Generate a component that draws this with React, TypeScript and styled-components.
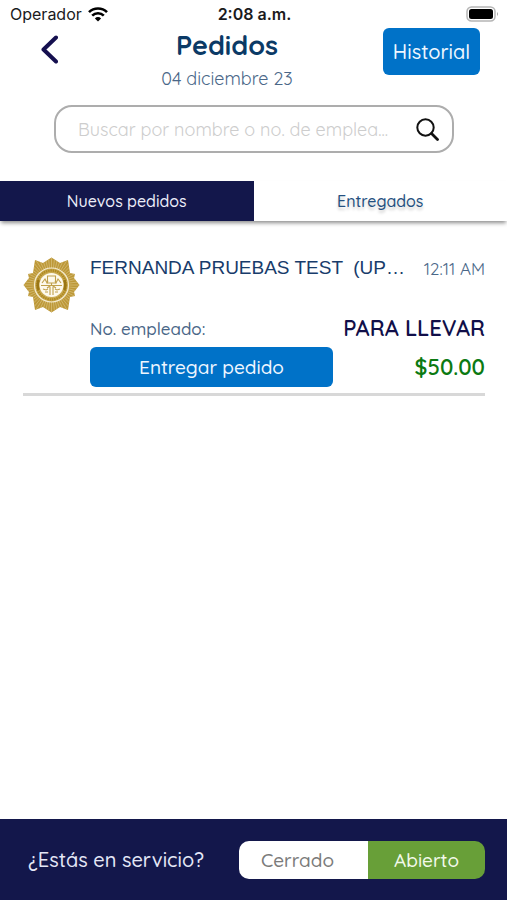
import React, { useState } from "react";
import styled, { createGlobalStyle } from "styled-components";

const GlobalStyle = createGlobalStyle`
  *, *::before, *::after { box-sizing: border-box; }
  body { margin: 0; background: #fff; }
  button, input { font: inherit; margin: 0; }
`;

const Screen = styled.div`
  display: flex;
  flex-direction: column;
  min-height: 100vh;
  font-family: Quicksand, Lato, sans-serif;
  color: #0b3a66;
`;

const StatusBar = styled.div`
  display: grid;
  grid-template-columns: 1fr auto 1fr;
  align-items: center;
  height: 28px;
  padding: 0 8px 0 10px;
  font-family: Inter, sans-serif;
  font-size: 16px;
  color: #1b1b1d;
`;

const Carrier = styled.span`
  display: flex;
  align-items: center;
  gap: 6px;
`;

const Clock = styled.span`
  font-weight: 600;
`;

const Battery = styled.svg`
  justify-self: end;
`;

const Header = styled.header`
  display: flex;
  align-items: flex-start;
  padding: 0 27px 0 41px;
`;

const BackButton = styled.button`
  display: flex;
  width: 30px;
  padding: 7px 0 0;
  border: 0;
  background: none;
  cursor: pointer;
`;

const Heading = styled.div`
  flex: 1;
  text-align: center;
`;

const Title = styled.h1`
  margin: 0;
  font-size: 27px;
  line-height: 34px;
  font-weight: 700;
`;

const DateText = styled.p`
  margin: 7px 0 0;
  font-size: 18px;
  line-height: 20px;
  color: #4a6788;
`;

const PrimaryButton = styled.button<{ $size: "small" | "wide" }>`
  width: ${(p) => (p.$size === "wide" ? 243 : 97)}px;
  height: ${(p) => (p.$size === "wide" ? 40 : 47)}px;
  padding: 0;
  border: 0;
  border-radius: 6px;
  background: #0072c8;
  color: #eef6ff;
  font-size: ${(p) => (p.$size === "wide" ? 19 : 20)}px;
  font-weight: 500;
  cursor: pointer;
`;

const Search = styled.label`
  display: flex;
  align-items: center;
  height: 48px;
  margin: 16px 53px 28px 54px;
  padding: 0 13px 0 22px;
  border: 2px solid #adadad;
  border-radius: 18px;
`;

const SearchInput = styled.input`
  flex: 1;
  min-width: 0;
  padding: 0;
  border: 0;
  outline: 0;
  background: none;
  font-size: 18px;
  color: #0b3a66;
  &::placeholder { color: #cdcdcd; opacity: 1; }
`;

const Tabs = styled.div`
  display: grid;
  grid-template-columns: 1fr 1fr;
  height: 40px;
  box-shadow: 0 3px 4px -1px rgba(0, 0, 0, 0.45);
`;

const Tab = styled.button<{ $active: boolean }>`
  padding: 0;
  border: 0;
  background: ${(p) => (p.$active ? "#13174b" : "#fff")};
  color: ${(p) => (p.$active ? "#eceefa" : "#24507f")};
  font-size: 16px;
  font-weight: 500;
  text-shadow: ${(p) => (p.$active ? "none" : "0 3px 3px rgba(0, 0, 0, 0.2)")};
  cursor: pointer;
`;

const OrderList = styled.ul`
  flex: 1;
  margin: 0;
  padding: 34px 22px 0 23px;
  list-style: none;
`;

const Order = styled.li`
  display: flex;
  gap: 10px;
  padding-bottom: 6px;
  border-bottom: 3px solid #d8d8d8;
`;

const Badge = styled.svg`
  flex: none;
  margin-top: 2px;
`;

const OrderBody = styled.div`
  flex: 1;
  min-width: 0;
`;

const OrderRow = styled.div<{ $height: number }>`
  display: flex;
  align-items: center;
  justify-content: space-between;
  height: ${(p) => p.$height}px;
  white-space: nowrap;
`;

const Customer = styled.h2`
  margin: 0;
  font-family: "Liberation Sans", sans-serif;
  font-size: 19px;
  font-weight: 400;
  white-space: pre;
  color: #183c6b;
`;

const Time = styled.time`
  font-size: 17px;
  color: #4a6788;
`;

const Employee = styled.span`
  font-size: 17px;
  font-weight: 500;
  color: #4a6788;
`;

const Kind = styled.strong`
  font-size: 22px;
  font-weight: 600;
  color: #110f49;
`;

const Price = styled.strong`
  font-size: 22px;
  font-weight: 600;
  color: #0b7a12;
`;

const Details = styled.div`
  margin-top: 30px;
`;

const DetailRow = styled(OrderRow)`
  margin-bottom: 2px;
`;

const ServiceBar = styled.footer`
  display: flex;
  align-items: center;
  justify-content: space-between;
  height: 81px;
  padding: 0 22px 0 28px;
  background: #13174b;
  color: #e4e7f7;
  font-size: 20px;
  font-weight: 500;
`;

const Toggle = styled.div`
  display: flex;
  height: 38px;
  overflow: hidden;
  border-radius: 10px;
`;

const ToggleButton = styled.button<{ $open?: boolean }>`
  width: ${(p) => (p.$open ? 117 : 129)}px;
  padding: ${(p) => (p.$open ? "0" : "0 12px 0 0")};
  border: 0;
  background: ${(p) => (p.$open ? "#689f38" : "#fff")};
  color: ${(p) => (p.$open ? "#f2f9ea" : "#7b7b7b")};
  font-size: 19px;
  cursor: pointer;
`;

const rays = Array.from({ length: 56 }, (_, i) => (i * Math.PI) / 28);

function OrderBadge() {
  return (
    <Badge width="57" height="56" viewBox="0 0 57 56" aria-hidden="true">
      <clipPath id="star">
        <path d="M28.5 .5 37 6 45 3 47 16 52 17 51 21 56.5 28 51 35 52 39 47 40 45 53 37 50 28.5 55.5 20 50 12 53 10 40 5 39 6 35 .5 28 6 21 5 17 10 16 12 3 20 6Z" />
      </clipPath>
      <g clipPath="url(#star)">
        <path d="M0 0h57v56H0z" fill="#bd9838" />
        {rays.map((a) => (
          <path
            key={a}
            d={`M28.5 28L${28.5 + 32 * Math.cos(a)} ${28 + 32 * Math.sin(a)}`}
            stroke="#d9c17c"
            strokeWidth="0.7"
          />
        ))}
      </g>
      <circle cx="28.5" cy="28" r="17" fill="#c9aa52" stroke="#f4ebcf" strokeWidth="1.2" />
      <circle cx="28.5" cy="28" r="14.5" fill="none" stroke="#b08a22" strokeWidth="2.4" strokeDasharray="1.6 .7" />
      <path d="M15.5 23q-1.5 5 0 10M41.500 23q1.500 5 0 10" fill="none" stroke="#9a7614" strokeWidth="2.6" />
      <circle cx="28.5" cy="28" r="12" fill="#fdf9ec" />
      <g fill="none" stroke="#c0a04a" strokeWidth="1.100">
        <path d="M24.500 19h8v7h-8zM28.500 26v3M18 28.500h21M19 26l3-4 2 4 1-2M38 26l-3-4-2 4-1-2M24 31l4.500-3 4.500 3M20 32l3 1 2-1M37 32l-3 1-2-1M27 30v8M30 30v8M22 35h3M32 35h3" />
      </g>
    </Badge>
  );
}

export default function App() {
  const [tab, setTab] = useState<"nuevos" | "entregados">("nuevos");
  const [query, setQuery] = useState("");

  return (
    <>
      <GlobalStyle />
      <Screen>
        <StatusBar>
          <Carrier>
            Operador
            <svg width="20" height="15" viewBox="0 0 20 15" fill="none" stroke="#000" strokeWidth="2.6" aria-hidden="true">
              <path d="M1 5.2a12.8 12.8 0 0 1 18 0M4.2 8.7a8.2 8.2 0 0 1 11.6 0" />
              <path d="M10 14.5 6.9 11.4a4.4 4.4 0 0 1 6.2 0Z" fill="#000" stroke="none" />
            </svg>
          </Carrier>
          <Clock>2:08 a.m.</Clock>
          <Battery width="33" height="16" viewBox="0 0 33 16" aria-hidden="true">
            <rect x="1" y="1" width="28" height="14" rx="4.5" fill="#fff" stroke="#b5b5b5" strokeWidth="1.5" />
            <rect x="3" y="3" width="24" height="10" rx="2.5" fill="#000" />
            <path d="M31 6q2 2 0 4Z" fill="#a5a5a5" />
          </Battery>
        </StatusBar>

        <Header>
          <BackButton aria-label="Volver">
            <svg width="17" height="29" viewBox="0 0 17 29" fill="none" stroke="#15104f" strokeWidth="4" strokeLinecap="round" strokeLinejoin="round">
              <path d="M15 2.5 2.5 14.5 15 26.5" />
            </svg>
          </BackButton>
          <Heading>
            <Title>Pedidos</Title>
            <DateText>04 diciembre 23</DateText>
          </Heading>
          <PrimaryButton $size="small">Historial</PrimaryButton>
        </Header>

        <Search>
          <SearchInput
            type="text"
            aria-label="Buscar pedidos"
            placeholder="Buscar por nombre o no. de emplea..."
            value={query}
            onChange={(e) => setQuery(e.target.value)}
          />
          <svg width="23" height="23" viewBox="0 0 23 23" fill="none" stroke="#111" strokeWidth="2" aria-hidden="true">
            <circle cx="9.5" cy="9.5" r="8.2" />
            <path d="m15.5 15.5 6 6" strokeWidth="2.8" strokeLinecap="round" />
          </svg>
        </Search>

        <Tabs role="tablist">
          <Tab role="tab" aria-selected={tab === "nuevos"} $active={tab === "nuevos"} onClick={() => setTab("nuevos")}>
            Nuevos pedidos
          </Tab>
          <Tab role="tab" aria-selected={tab === "entregados"} $active={tab === "entregados"} onClick={() => setTab("entregados")}>
            Entregados
          </Tab>
        </Tabs>

        <OrderList>
          <Order>
            <OrderBadge />
            <OrderBody>
              <OrderRow $height={26}>
                <Customer>{"FERNANDA PRUEBAS TEST  (UP…"}</Customer>
                <Time>12:11 AM</Time>
              </OrderRow>
              <Details>
                <DetailRow $height={34}>
                  <Employee>No. empleado:</Employee>
                  <Kind>PARA LLEVAR</Kind>
                </DetailRow>
                <OrderRow $height={40}>
                  <PrimaryButton $size="wide">Entregar pedido</PrimaryButton>
                  <Price>$50.00</Price>
                </OrderRow>
              </Details>
            </OrderBody>
          </Order>
        </OrderList>

        <ServiceBar>
          <span>¿Estás en servicio?</span>
          <Toggle role="group" aria-label="¿Estás en servicio?">
            <ToggleButton aria-pressed={false}>Cerrado</ToggleButton>
            <ToggleButton $open aria-pressed={true}>Abierto</ToggleButton>
          </Toggle>
        </ServiceBar>
      </Screen>
    </>
  );
}
